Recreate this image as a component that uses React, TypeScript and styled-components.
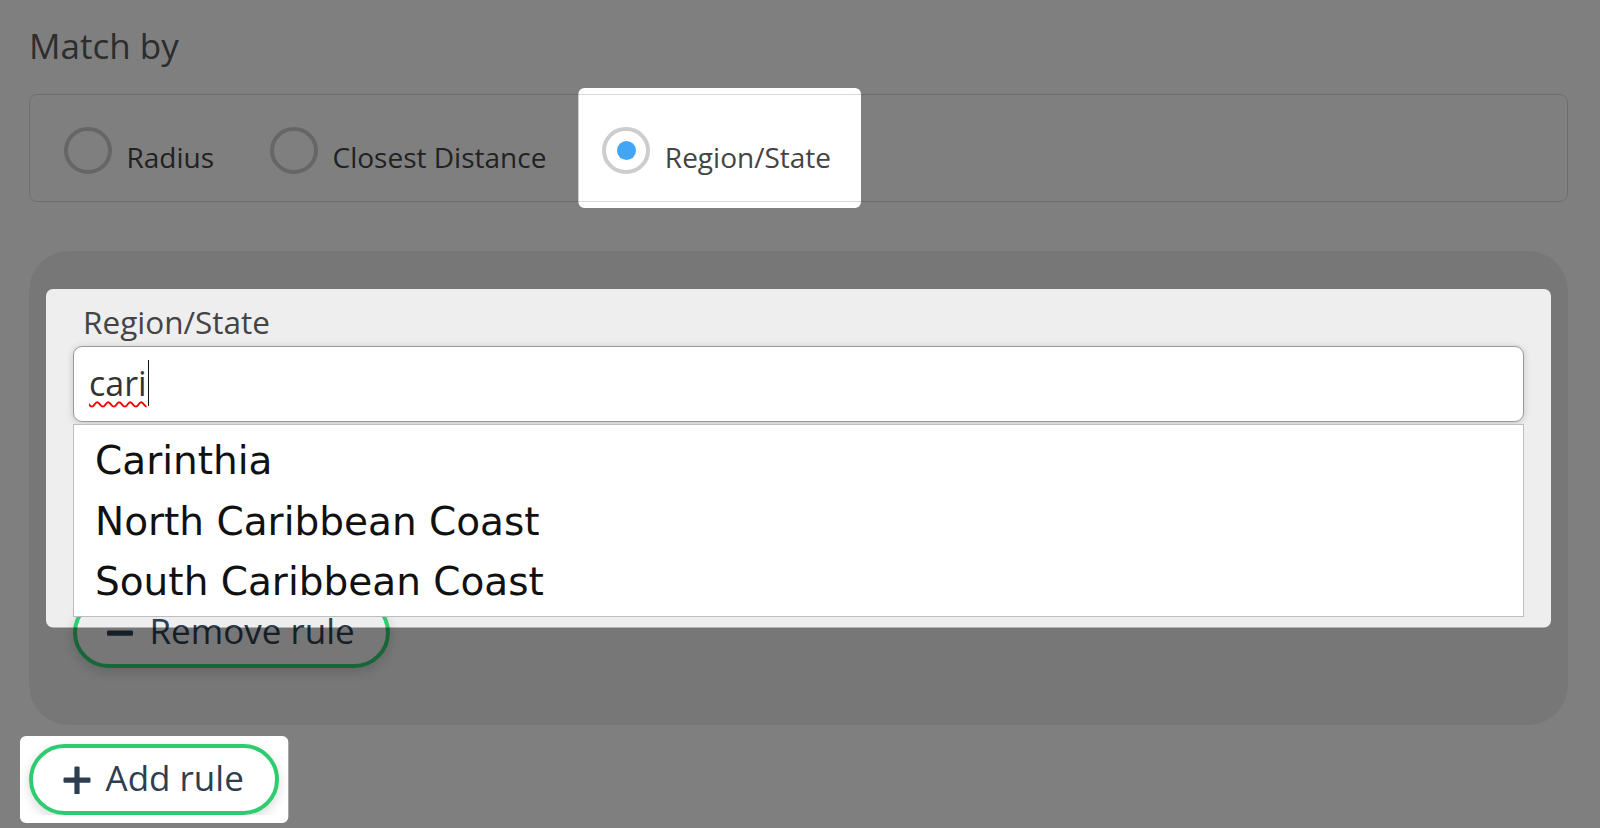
import React, { useLayoutEffect, useRef, useState } from "react";
import styled, { createGlobalStyle } from "styled-components";

const GlobalStyle = createGlobalStyle`
  html, body { margin: 0; padding: 0; background: #fff; }
  body {
    font-family: "Open Sans", "Noto Sans", sans-serif;
    overflow: hidden;
  }
  *, *::before, *::after { box-sizing: border-box; }
`;

const Page = styled.main`
  width: 1539px;
  margin-left: 29px;
  padding-top: 22px;
  display: flex;
  flex-direction: column;
  align-items: flex-start;
`;

const Heading = styled.h2`
  margin: 0 0 24px;
  font-size: 35px;
  font-weight: 400;
  line-height: 48px;
  color: #5a5a5a;
`;

const OptionGroup = styled.div`
  align-self: stretch;
  height: 108px;
  padding: 1px 0 1px 18px;
  border: 1px solid #dadada;
  border-radius: 8px;
  display: flex;
  gap: 18px;
`;

const Option = styled.label`
  display: flex;
  align-items: flex-start;
  gap: 15px;
  height: 104px;
  padding: 0 22px 0 16px;
  cursor: pointer;
`;

const HiddenRadio = styled.input`
  position: absolute;
  opacity: 0;
  width: 0;
  height: 0;
  margin: 0;
`;

const Ring = styled.span<{ $checked?: boolean }>`
  flex-shrink: 0;
  margin-top: 30.5px;
  width: 47.5px;
  height: 47.5px;
  border: 4px solid #cdcdcd;
  border-radius: 50%;
  display: flex;
  align-items: center;
  justify-content: center;
  &::after {
    content: "";
    width: 19px;
    height: 19px;
    border-radius: 50%;
    background: ${(p) => (p.$checked ? "#42a5f5" : "transparent")};
  }
`;

const OptionText = styled.span`
  margin-top: 42.4px;
  font-size: 28px;
  line-height: 38px;
  color: #444;
  white-space: nowrap;
`;

const RuleGroup = styled.section`
  align-self: stretch;
  margin-top: 49px;
  background: #eee;
  border-radius: 40px;
  padding: 49px 44px 57px;
  display: flex;
  flex-direction: column;
  align-items: flex-start;
`;

const Field = styled.div`
  align-self: stretch;
  display: flex;
  flex-direction: column;
`;

const FieldLabel = styled.label`
  padding-left: 10px;
  font-size: 31.5px;
  line-height: 43px;
  color: #444;
  margin-bottom: 3px;
`;

const InputWrap = styled.div`
  position: relative;
`;

const InputBox = styled.div`
  height: 76px;
  padding: 0 15px 3px;
  background: #fff;
  border: 1px solid #9a9a9a;
  border-radius: 9px;
  box-shadow: 0 1px 7px rgba(0, 0, 0, 0.18);
  display: flex;
  align-items: center;
  font-size: 34px;
  line-height: 46px;
  color: #333;
`;

const Typed = styled.span`
  text-decoration: underline wavy #f00;
  text-decoration-thickness: 1.5px;
  text-underline-offset: 5px;
  text-decoration-skip-ink: none;
`;

const Caret = styled.span`
  width: 1px;
  height: 46px;
  margin-left: 1.5px;
  background: #111;
`;

const Suggestions = styled.ul`
  position: absolute;
  top: calc(100% + 2px);
  left: 0;
  right: 0;
  margin: 0;
  padding: 6px 0 3px;
  list-style: none;
  background: #fff;
  border: 1px solid #bdbdbd;
  z-index: 5;
`;

const Suggestion = styled.li`
  padding-left: 21px;
  font-family: "DejaVu Sans", Verdana, sans-serif;
  font-size: 39px;
  line-height: 60.5px;
  color: #111;
  white-space: nowrap;
`;

const PillButton = styled.button<{ $top: number }>`
  margin-top: ${(p) => p.$top}px;
  height: 71px;
  padding: 0 31.5px 0 29.5px;
  display: inline-flex;
  align-items: center;
  gap: 15px;
  border: 4.5px solid #2ecc71;
  border-radius: 999px;
  background: transparent;
  box-shadow: 0 4px 12px rgba(0, 0, 0, 0.15);
  color: #2c3e50;
  font-family: inherit;
  font-size: 35px;
  line-height: 48px;
  cursor: pointer;
`;

const ButtonText = styled.span`
  margin-bottom: 4px;
  white-space: nowrap;
`;

const Shade = styled.div`
  position: fixed;
  inset: 0;
  background: rgba(0, 0, 0, 0.5);
  z-index: 100;
  pointer-events: none;
`;

const PlusIcon = () => (
  <svg width="28" height="28" viewBox="0 0 28 28" aria-hidden="true">
    <rect x="0.5" y="11.5" width="27" height="5.2" rx="1.2" fill="currentColor" />
    <rect x="11.4" y="0.5" width="5.2" height="28" rx="1.2" fill="currentColor" />
  </svg>
);

const MinusIcon = () => (
  <svg width="28" height="28" viewBox="0 0 28 28" aria-hidden="true">
    <rect x="0" y="11.5" width="26" height="5.2" rx="1.2" fill="currentColor" />
  </svg>
);

type Target = {
  refs: React.RefObject<HTMLElement | null>[];
  padX: number;
  padY: number;
  radius: number;
};

const holePath = (x: number, y: number, w: number, h: number, r: number) =>
  `M${x + r} ${y}H${x + w - r}A${r} ${r} 0 0 1 ${x + w} ${y + r}V${y + h - r}` +
  `A${r} ${r} 0 0 1 ${x + w - r} ${y + h}H${x + r}A${r} ${r} 0 0 1 ${x} ${y + h - r}` +
  `V${y + r}A${r} ${r} 0 0 1 ${x + r} ${y}Z`;

function Spotlight({ targets }: { targets: Target[] }) {
  const [clip, setClip] = useState<string | undefined>(undefined);

  useLayoutEffect(() => {
    const update = () => {
      const W = window.innerWidth;
      const H = window.innerHeight;
      let d = `M0 0H${W}V${H}H0Z`;
      targets.forEach((t) => {
        const rects = t.refs
          .map((r) => r.current?.getBoundingClientRect())
          .filter((r): r is DOMRect => !!r);
        if (!rects.length) return;
        const left = Math.min(...rects.map((r) => r.left)) - t.padX;
        const top = Math.min(...rects.map((r) => r.top)) - t.padY;
        const right = Math.max(...rects.map((r) => r.right)) + t.padX;
        const bottom = Math.max(...rects.map((r) => r.bottom)) + t.padY;
        d += holePath(left, top, right - left, bottom - top, t.radius);
      });
      setClip(`path(evenodd, "${d}")`);
    };
    update();
    window.addEventListener("resize", update);
    if (document.fonts) document.fonts.ready.then(update);
    return () => window.removeEventListener("resize", update);
  }, []);

  return <Shade style={clip ? { clipPath: clip } : undefined} />;
}

const options = ["Radius", "Closest Distance", "Region/State"];
const suggestions = ["Carinthia", "North Caribbean Coast", "South Caribbean Coast"];

export default function App() {
  const regionOptionRef = useRef<HTMLLabelElement>(null);
  const fieldRef = useRef<HTMLDivElement>(null);
  const listRef = useRef<HTMLUListElement>(null);
  const addRef = useRef<HTMLButtonElement>(null);

  const targets: Target[] = [
    { refs: [regionOptionRef], padX: 8, padY: 8, radius: 6 },
    { refs: [fieldRef, listRef], padX: 27, padY: 11, radius: 7 },
    { refs: [addRef], padX: 9, padY: 8, radius: 6 },
  ];

  return (
    <>
      <GlobalStyle />
      <Page>
        <Heading>Match by</Heading>
        <OptionGroup role="radiogroup">
          {options.map((o) => {
            const checked = o === "Region/State";
            return (
              <Option key={o} ref={checked ? regionOptionRef : undefined}>
                <HiddenRadio type="radio" name="match" defaultChecked={checked} />
                <Ring $checked={checked} />
                <OptionText>{o}</OptionText>
              </Option>
            );
          })}
        </OptionGroup>

        <RuleGroup>
          <Field ref={fieldRef}>
            <FieldLabel>Region/State</FieldLabel>
            <InputWrap>
              <InputBox role="combobox" aria-expanded="true">
                <Typed>cari</Typed>
                <Caret />
              </InputBox>
              <Suggestions ref={listRef} role="listbox">
                {suggestions.map((s) => (
                  <Suggestion key={s} role="option">
                    {s}
                  </Suggestion>
                ))}
              </Suggestions>
            </InputWrap>
          </Field>
          <PillButton $top={175}>
            <MinusIcon />
            <ButtonText>Remove rule</ButtonText>
          </PillButton>
        </RuleGroup>

        <PillButton $top={19} ref={addRef}>
          <PlusIcon />
          <ButtonText>Add rule</ButtonText>
        </PillButton>
      </Page>
      <Spotlight targets={targets} />
    </>
  );
}
